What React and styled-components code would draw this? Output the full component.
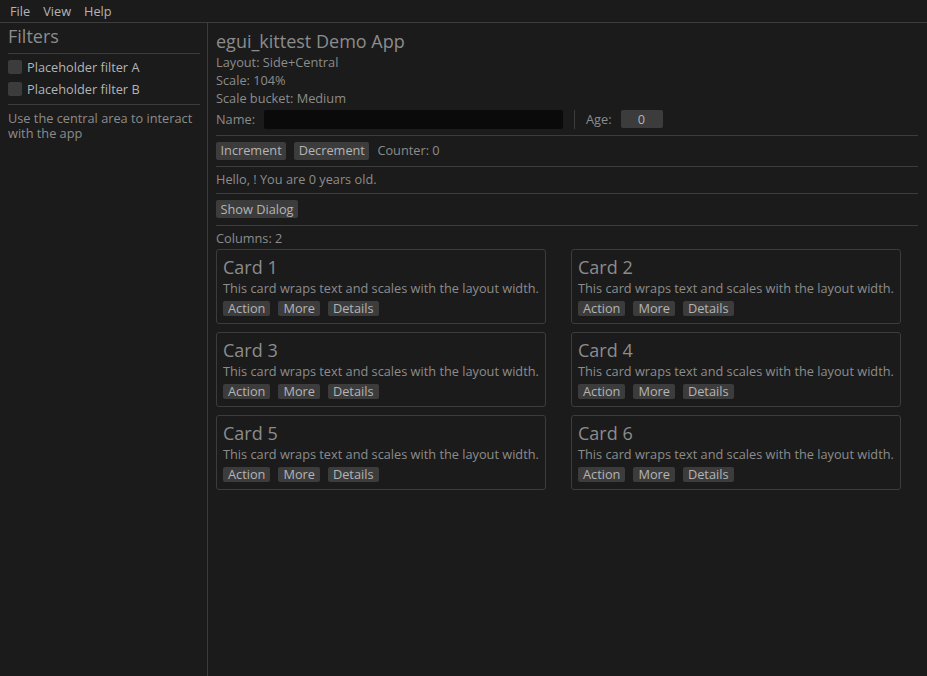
import React from "react";
import styled, { createGlobalStyle } from "styled-components";

const GlobalStyle = createGlobalStyle`
  html, body { margin: 0; padding: 0; background: #1b1b1b; }
  body {
    font-family: "Open Sans", "Noto Sans", sans-serif;
    font-weight: 400;
    font-size: 12.75px;
    color: #8c8c8c;
    overflow: hidden;
  }
  * { box-sizing: border-box; }
`;

const Screen = styled.div`
  width: 927px;
  height: 676px;
  display: flex;
  flex-direction: column;
`;

const MenuBar = styled.div`
  height: 23px;
  flex: none;
  display: flex;
  align-items: center;
  padding: 0 0 1px 6px;
  border-bottom: 1px solid #3c3c3c;
`;

const MenuItem = styled.span`
  color: #b4b4b4;
  padding: 0 4px;
  line-height: 18px;
  margin-right: ${(p) => p.$gap || 0}px;
`;

const Body = styled.div`
  flex: 1;
  display: flex;
  min-height: 0;
`;

const SidePanel = styled.aside`
  width: 208px;
  flex: none;
  border-right: 1px solid #3c3c3c;
  padding: 2px 7px 0 8px;
  display: flex;
  flex-direction: column;
`;

const Central = styled.main`
  flex: 1;
  padding: 7px 9px 0 8px;
  display: flex;
  flex-direction: column;
  gap: 3px;
`;

const Heading = styled.div`
  font-size: 18px;
  line-height: 22px;
  white-space: nowrap;
`;

const Label = styled.div`
  line-height: 15px;
  white-space: ${(p) => (p.$wrap ? "normal" : "nowrap")};
  margin: ${(p) => p.$m || 0};
`;

const HSep = styled.div`
  height: 6px;
  display: flex;
  align-items: center;
  margin: ${(p) => p.$m || 0};
  &::after {
    content: "";
    flex: 1;
    height: 1px;
    background: #3c3c3c;
  }
`;

const CheckRow = styled.label`
  display: flex;
  align-items: center;
  gap: 5px;
  height: 18px;
  margin-top: ${(p) => p.$mt || 0}px;
  color: #b4b4b4;
  white-space: nowrap;
`;

const CheckBox = styled.span`
  width: 14px;
  height: 14px;
  border-radius: 2px;
  background: #3c3c3c;
  flex: none;
`;

const Row = styled.div`
  display: flex;
  align-items: center;
  gap: ${(p) => p.$gap || 8}px;
  height: ${(p) => p.$h || 18}px;
`;

const TextEdit = styled.div`
  width: 299px;
  height: 19px;
  background: #0a0a0a;
  border-radius: 2px;
  margin-left: 1px;
`;

const VSep = styled.div`
  width: 1px;
  height: 19px;
  background: #3c3c3c;
  margin: 0 3px;
`;

const DragValue = styled.div`
  width: 42px;
  height: 18px;
  border-radius: 2px;
  background: #3c3c3c;
  color: #b4b4b4;
  display: flex;
  align-items: center;
  justify-content: center;
  margin-left: 1px;
`;

const Button = styled.button`
  font: inherit;
  color: #b4b4b4;
  background: #3c3c3c;
  border: none;
  border-radius: 2px;
  height: ${(p) => (p.$small ? 15 : 18)}px;
  padding: 0 ${(p) => (p.$small ? 5 : 4.5)}px;
  line-height: 1;
  display: flex;
  align-items: center;
  white-space: nowrap;
  cursor: pointer;
`;

const CardGrid = styled.div`
  display: grid;
  grid-template-columns: 330px 330px;
  column-gap: 25px;
  row-gap: 8px;
`;

const Card = styled.div`
  border: 1px solid #3c3c3c;
  border-radius: 3px;
  padding: 6px 6px 7px;
  height: 75px;
  display: flex;
  flex-direction: column;
`;

const CardTitle = styled.div`
  font-size: 18px;
  line-height: 22px;
`;

const CardText = styled.div`
  line-height: 16px;
  margin-top: 2px;
  white-space: nowrap;
`;

const CardActions = styled.div`
  display: flex;
  gap: 8px;
  margin-top: 5px;
`;

const cards = [1, 2, 3, 4, 5, 6];

export default function App() {
  return (
    <Screen>
      <GlobalStyle />
      <MenuBar>
        <MenuItem $gap={5}>File</MenuItem>
        <MenuItem $gap={5}>View</MenuItem>
        <MenuItem>Help</MenuItem>
      </MenuBar>
      <Body>
        <SidePanel>
          <Heading>Filters</Heading>
          <HSep $m="3px 0 0" />
          <CheckRow $mt={2}>
            <CheckBox />
            Placeholder filter A
          </CheckRow>
          <CheckRow $mt={4}>
            <CheckBox />
            Placeholder filter B
          </CheckRow>
          <HSep $m="3px 0 0" />
          <Label $wrap $m="4px 0 0">
            Use the central area to interact with the app
          </Label>
        </SidePanel>
        <Central>
          <Heading>egui_kittest Demo App</Heading>
          <Label>Layout: Side+Central</Label>
          <Label>Scale: 104%</Label>
          <Label>Scale bucket: Medium</Label>
          <Row $gap={8} $h={20}>
            <Label>Name:</Label>
            <TextEdit />
            <VSep />
            <Label>Age:</Label>
            <DragValue>0</DragValue>
          </Row>
          <HSep />
          <Row $h={19}>
            <Button>Increment</Button>
            <Button>Decrement</Button>
            <Label>Counter: 0</Label>
          </Row>
          <HSep />
          <Label>Hello, ! You are 0 years old.</Label>
          <HSep />
          <Row $h={20}>
            <Button>Show Dialog</Button>
          </Row>
          <HSep />
          <Label>Columns: 2</Label>
          <CardGrid>
            {cards.map((n) => (
              <Card key={n}>
                <CardTitle>Card {n}</CardTitle>
                <CardText>This card wraps text and scales with the layout width.</CardText>
                <CardActions>
                  <Button $small>Action</Button>
                  <Button $small>More</Button>
                  <Button $small>Details</Button>
                </CardActions>
              </Card>
            ))}
          </CardGrid>
        </Central>
      </Body>
    </Screen>
  );
}
